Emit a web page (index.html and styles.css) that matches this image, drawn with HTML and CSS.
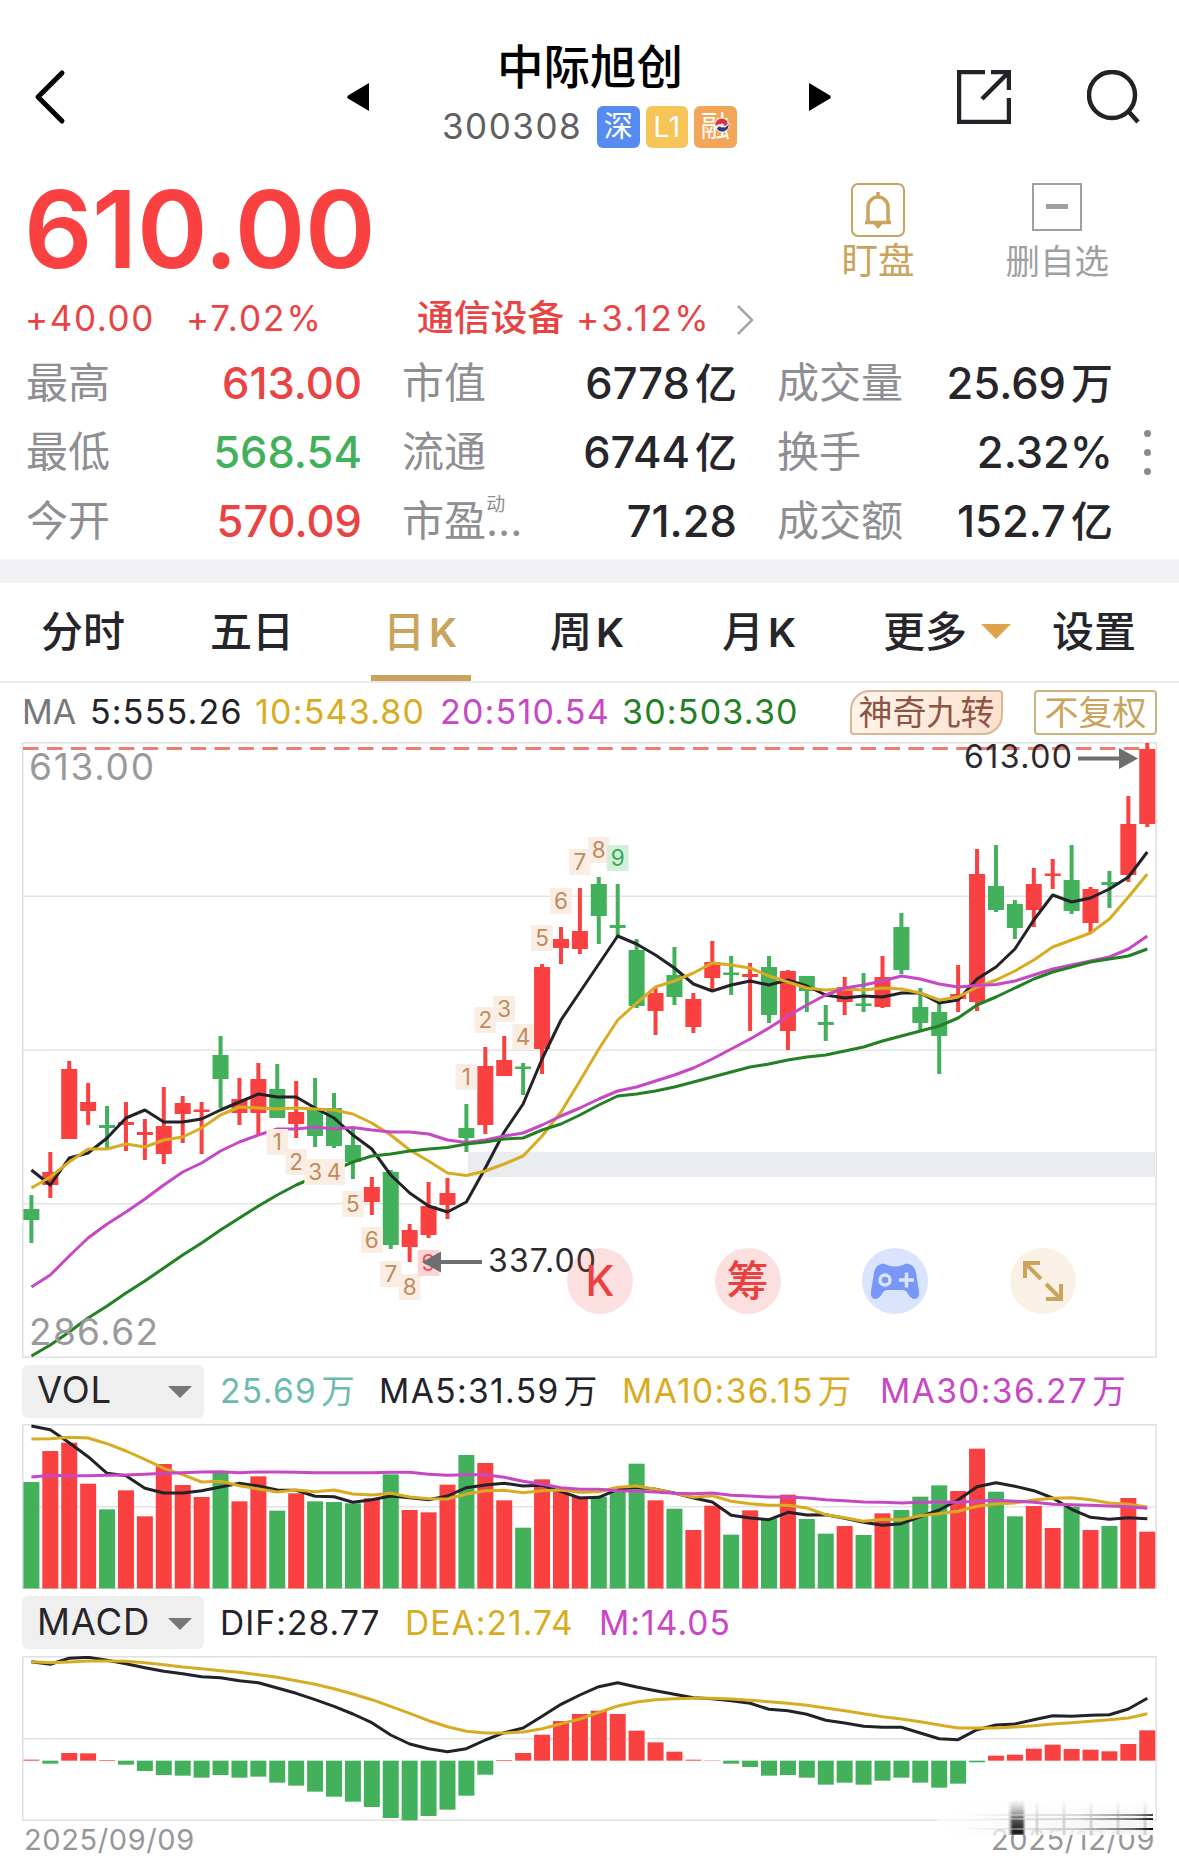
FILE: index.html
```html
<!DOCTYPE html>
<html lang="zh-CN">
<head>
    <meta charset="UTF-8">
    <meta name="viewport" content="width=1179">
    <title>中际旭创 300308</title>
    <link rel="stylesheet" href="styles.css">
</head>
<body>
    <header class="header">
        <svg class="icon-back" viewBox="0 0 32 56"><path d="M28 4 4 28l24 24"/></svg>
        <svg class="icon-prev" viewBox="0 0 22 28"><path d="M22 0v28L1 15.500q-1.500-1.500 0-3z"/></svg>
        <div class="stock">
            <h1>中际旭创</h1>
            <div class="stock-code">
                <span class="code">300308</span>
                <span class="tag tag-blue">深</span>
                <span class="tag tag-yellow">L1</span>
                <span class="tag tag-orange">融
                    <svg class="swirl" viewBox="0 0 16 16">
                        <circle cx="8" cy="8" r="7.500" fill="#f3e9ee"/>
                        <path d="M1.500 9A6.500 6.500 0 0 1 13 4c2 4-2 6-5 4-2-1-4-1-6.500 1z" fill="#d8343f"/>
                        <path d="M14.500 7A6.500 6.500 0 0 1 3 12c0-2 3-3 5-2 3 1 5 0 6.500-3z" fill="#27407f"/>
                        <circle cx="8" cy="8.500" r="2" fill="#f3e9ee"/>
                    </svg>
                </span>
            </div>
        </div>
        <svg class="icon-next" viewBox="0 0 22 28"><path d="M0 0v28l21-12.500q1.500-1.500 0-3z"/></svg>
        <svg class="icon-share" viewBox="0 0 54 54"><path d="M28 2H2v50h50V28M34 2h18v18M52 2 25 29"/></svg>
        <svg class="icon-search" viewBox="0 0 54 54"><circle cx="25" cy="25" r="23"/><path d="m42 42 9 10"/></svg>
    </header>

    <section class="quote">
        <div class="price">610.00</div>
        <div class="actions">
            <div class="action watch">
                <svg viewBox="0 0 54 54">
                    <rect x="1" y="1" width="52" height="52" rx="6" stroke-width="2"/>
                    <path d="M27 9v4M14 39.500h26M17 39V24a10 10 0 0 1 20 0v15" stroke-width="3.500"/>
                    <path d="M22.500 41h9L27 46z" fill="#c9a45c" stroke="none"/>
                </svg>
                <span>盯盘</span>
            </div>
            <div class="action remove">
                <svg viewBox="0 0 54 54">
                    <rect x="3" y="1" width="48" height="46" stroke-width="2"/>
                    <path d="M16 23.500h22" stroke-width="5"/>
                </svg>
                <span>删自选</span>
            </div>
        </div>
    </section>

    <section class="change">
        <span class="change-value">+40.00</span>
        <span class="change-rate">+7.02%</span>
        <span class="sector">通信设备</span>
        <span class="sector-rate">+3.12%</span>
        <svg class="icon-more" viewBox="0 0 18 32"><path d="m2 2 14 14L2 30"/></svg>
    </section>

    <section class="stats">
        <span class="label">最高</span><span class="value up">613.00</span>
        <span class="label">市值</span><span class="value">6778<i>亿</i></span>
        <span class="label">成交量</span><span class="value">25.69<i>万</i></span>
        <span class="label">最低</span><span class="value down">568.54</span>
        <span class="label">流通</span><span class="value">6744<i>亿</i></span>
        <span class="label">换手</span><span class="value">2.32%</span>
        <span class="label">今开</span><span class="value up">570.09</span>
        <span class="label">市盈...<sup>动</sup></span><span class="value">71.28</span>
        <span class="label">成交额</span><span class="value">152.7<i>亿</i></span>
        <div class="dots"><span></span><span></span><span></span></div>
    </section>

    <nav class="tabs">
        <a class="tab">分时</a>
        <a class="tab">五日</a>
        <a class="tab active">日<em>K</em></a>
        <a class="tab">周<em>K</em></a>
        <a class="tab">月<em>K</em></a>
        <a class="tab">更多</a>
        <span class="caret"></span>
        <a class="tab">设置</a>
    </nav>

    <section class="ma-row">
        <span class="ma ma-name">MA</span>
        <span class="ma c-black">5:555.26</span>
        <span class="ma c-gold">10:543.80</span>
        <span class="ma c-purple">20:510.54</span>
        <span class="ma c-green">30:503.30</span>
        <span class="chip nine">神奇九转</span>
        <span class="chip adjust">不复权</span>
    </section>

    <section class="kline">
        <svg id="kline" viewBox="22 742 1135 616"></svg>
        <div class="tools">
            <button class="tool red">K</button>
            <button class="tool red">筹</button>
            <button class="tool blue">
                <svg viewBox="0 0 48 36">
                    <path d="M8 2q4-3 8 0 8 3 16 0 4-3 8 0 4 2 5 8l3 18q1 7-4 8-4 0-7-5-2-4-6-4H17q-4 0-6 4-3 5-7 5-5-1-4-8l3-18q1-6 5-8z" fill="#7897f7"/>
                    <circle cx="14" cy="17" r="5" fill="none" stroke="#dbe4fd" stroke-width="3.500"/>
                    <path d="M28 17h15M35.500 9.500v15" stroke="#dbe4fd" stroke-width="3.500"/>
                </svg>
            </button>
            <button class="tool cream">
                <svg viewBox="0 0 40 40"><path d="M2 17V2h15M2 2l16 16M23 38h15V23M38 38 23 23"/></svg>
            </button>
        </div>
    </section>

    <section class="indicator vol">
        <button class="select">VOL<span></span></button>
        <span class="c-teal">25.69<i>万</i></span>
        <span class="c-black">MA5:31.59<i>万</i></span>
        <span class="c-gold">MA10:36.15<i>万</i></span>
        <span class="c-purple">MA30:36.27<i>万</i></span>
    </section>
    <svg class="panel" id="volume" viewBox="22 0 1135 165"></svg>

    <section class="indicator macd">
        <button class="select">MACD<span></span></button>
        <span class="c-black">DIF:28.77</span>
        <span class="c-gold">DEA:21.74</span>
        <span class="c-purple">M:14.05</span>
    </section>
    <svg class="panel" id="macd" viewBox="22 0 1135 165"></svg>

    <footer class="dates">
        <span>2025/09/09</span>
        <span>2025/12/09</span>
        <div class="smear">
            <i class="bar"></i><i class="streak"></i><i class="streak"></i><i class="streak"></i>
        </div>
    </footer>

    <script src="chart.js"></script>
</body>
</html>
```

FILE: styles.css
```css
:root {
    --up: #fa4141;
    --down: #43b05c;
    --text: #26262a;
    --gray: #8e8e93;
    --gold: #c9a45c;
}

* {
    margin: 0;
    padding: 0;
    box-sizing: border-box;
}

body {
    width: 1179px;
    height: 1860px;
    overflow: hidden;
    background: #fff;
    color: var(--text);
    font-family: Inter, "Noto Sans CJK SC", sans-serif;
}

svg {
    display: block;
}

i, em {
    font-style: normal;
}

button {
    border: none;
    font-family: inherit;
}

/* 顶部 */
.header {
    display: flex;
    align-items: flex-start;
    height: 172px;
    padding-left: 34px;
}

.header > svg {
    flex: none;
}

.icon-back {
    width: 32px;
    height: 56px;
    margin-top: 69px;
    fill: none;
    stroke: #000;
    stroke-width: 5;
    stroke-linecap: round;
    stroke-linejoin: round;
}

.icon-prev,
.icon-next {
    width: 22px;
    height: 28px;
    margin-top: 83px;
}

.icon-prev {
    margin-left: 281px;
}

.stock {
    width: 440px;
    padding-top: 37px;
}

.stock h1 {
    padding-left: 2px;
    font-size: 46.5px;
    line-height: 61px;
    font-weight: 500;
    color: #000;
    text-align: center;
}

.stock-code {
    display: flex;
    align-items: center;
    gap: 6px;
    height: 42px;
    margin-top: 8px;
    padding-left: 73px;
}

.code {
    width: 149px;
    padding-bottom: 2px;
    font-size: 35px;
    letter-spacing: 1.5px;
    color: #606063;
}

.tag {
    position: relative;
    width: 42.5px;
    height: 42px;
    border-radius: 6px;
    color: #fff;
    font-size: 29px;
    line-height: 41px;
    text-align: center;
}

.tag-blue {
    background: #568cf1;
}

.tag-yellow {
    background: #f5c657;
}

.tag-orange {
    background: #f2a758;
}

.swirl {
    position: absolute;
    left: 20px;
    top: 11px;
    width: 16px;
    height: 16px;
}

.icon-share,
.icon-search {
    width: 54px;
    height: 54px;
    fill: none;
    stroke: #222228;
    stroke-width: 4.5;
}

.icon-share {
    margin: 70px 0 0 126px;
}

.icon-search {
    margin: 70px 0 0 76px;
}

/* 现价 */
.quote {
    display: flex;
    justify-content: space-between;
    height: 118px;
}

.price {
    padding-left: 24px;
    font-size: 107px;
    line-height: 114px;
    font-weight: 600;
    letter-spacing: -0.4px;
    color: var(--up);
}

.actions {
    display: flex;
    gap: 91px;
    padding: 11px 70px 0 0;
}

.action {
    display: flex;
    flex-direction: column;
    align-items: center;
    font-size: 36.5px;
    line-height: 48px;
}

.action svg {
    width: 54px;
    height: 54px;
    fill: none;
    stroke: currentColor;
}

.watch {
    color: var(--gold);
}

.remove {
    color: #a0a0a3;
    font-size: 34.5px;
    line-height: 50px;
}

.change {
    display: flex;
    align-items: center;
    height: 56px;
    padding-left: 25px;
    font-size: 35px;
    color: #e84444;
}

.change-value {
    width: 161px;
    letter-spacing: 1.6px;
}

.change-rate {
    width: 231px;
    letter-spacing: 2px;
}

.sector {
    width: 159px;
    font-size: 36.8px;
    line-height: 50px;
    font-weight: 500;
}

.sector-rate {
    width: 160px;
    letter-spacing: 2.4px;
}

.icon-more {
    width: 18px;
    height: 32px;
    margin-top: 4px;
    fill: none;
    stroke: #a5a5a8;
    stroke-width: 2.5;
}

/* 行情数据 */
.stats {
    position: relative;
    display: grid;
    grid-template-columns: 120px 256px 120px 255px 140px 236px;
    grid-template-rows: repeat(3, 69px);
    height: 213px;
    padding: 3px 0 0 26px;
}

.label {
    font-size: 42px;
    line-height: 68px;
    white-space: nowrap;
    color: var(--gray);
}

.value {
    padding-right: 40px;
    font-size: 43.5px;
    line-height: 68px;
    font-weight: 500;
    text-align: right;
    white-space: nowrap;
}

.value i {
    margin-left: 5px;
    font-size: 42px;
    line-height: 60px;
}

.label sup {
    display: inline-block;
    width: 20px;
    margin-left: -36px;
    font-size: 19px;
    line-height: 20px;
    vertical-align: 25px;
}

.up {
    color: #ea4343;
}

.down {
    color: var(--down);
}

.dots {
    position: absolute;
    right: 28px;
    top: 84px;
    display: flex;
    flex-direction: column;
    gap: 12px;
}

.dots span {
    width: 7px;
    height: 7px;
    border-radius: 50%;
    background: #8b8b8e;
}

/* 周期切换 */
.tabs {
    display: grid;
    grid-template-columns: 169px 161px 179px 172px 161px 98px 71px auto;
    justify-items: start;
    height: 124px;
    padding-left: 41px;
    border-top: 24px solid #f2f2f4;
    border-bottom: 2px solid #e9e9ea;
    font-size: 42px;
    line-height: 98px;
    font-weight: 500;
}

.tab {
    white-space: nowrap;
}

.tab em {
    margin-left: 4px;
    font-weight: 600;
    font-size: 40px;
}

.active {
    width: 100px;
    height: 98px;
    padding-left: 12px;
    border-bottom: 6px solid var(--gold);
    color: var(--gold);
}

/* 均线 */
.ma-row {
    display: grid;
    grid-template-columns: 68px 165px 185px 182px 228px 184px auto;
    align-items: center;
    height: 59px;
    padding-left: 22px;
    font-size: 34px;
    letter-spacing: 1.2px;
    white-space: nowrap;
}

.ma {
    padding-bottom: 3px;
}

.ma-name {
    letter-spacing: 0;
    color: #77777a;
}

.c-black {
    color: #222228;
}

.c-gold {
    color: #d8ac22;
}

.c-purple {
    color: #c748c5;
}

.c-green {
    color: #238023;
}

.c-teal {
    color: #6cbab0;
}

.chip {
    height: 45px;
    line-height: 42px;
    text-align: center;
    letter-spacing: 0;
}

.nine {
    width: 153px;
    border: 2px solid #d8b795;
    border-radius: 20px 4px 20px 4px;
    background: linear-gradient(110deg, #fff5ec, #fce0cd);
    color: #8d5545;
}

.adjust {
    width: 123px;
    border: 2px solid #cbb37a;
    border-radius: 4px;
    color: var(--gold);
}

/* K线图 */
.kline {
    position: relative;
    height: 616px;
    padding-left: 22px;
}

.kline > svg {
    width: 1135px;
    height: 616px;
}

.tools {
    position: absolute;
    left: 567px;
    bottom: 44px;
    display: flex;
    gap: 81.6px;
}

.tool {
    display: flex;
    justify-content: center;
    align-items: center;
    width: 66px;
    height: 66px;
    border-radius: 50%;
    font-size: 42px;
    line-height: 60px;
    font-weight: 500;
}

.red {
    background: rgba(235, 65, 55, 0.16);
    color: #ea4040;
}

.blue {
    background: #dbe4fd;
}

.blue svg {
    width: 48px;
    height: 36px;
}

.cream {
    background: #f9f1e5;
}

.cream svg {
    width: 40px;
    height: 40px;
    fill: none;
    stroke: var(--gold);
    stroke-width: 4;
}

/* 指标 */
.indicator {
    display: grid;
    align-items: center;
    height: 66px;
    padding-left: 22px;
    font-size: 33.5px;
    letter-spacing: 1.4px;
    white-space: nowrap;
}

.vol {
    grid-template-columns: 198px 159px 243px 258px auto;
}

.macd {
    grid-template-columns: 198px 185px 194px auto;
    height: 67px;
    letter-spacing: 1.1px;
}

.indicator > span {
    line-height: 50px;
}

.indicator i {
    margin-left: 4px;
}

.select {
    display: flex;
    justify-content: space-between;
    align-items: center;
    width: 182px;
    height: 53px;
    padding: 0 12px 2px 15px;
    border-radius: 6px;
    background: #efefef;
    color: var(--text);
    font-size: 36.5px;
    letter-spacing: 0.8px;
}

.select span,
.caret {
    width: 24px;
    border: 12px solid transparent;
    border-top-color: #77777a;
    border-bottom: none;
}

.select span {
    margin-top: 4px;
}

.caret {
    width: 30px;
    height: 15px;
    margin-top: 41px;
    border-width: 15px 15px 0;
    border-top-color: #dda24c;
}

.panel {
    width: 1135px;
    height: 165px;
    margin-left: 22px;
}

.dates {
    position: relative;
    display: flex;
    justify-content: space-between;
    padding: 0 24px;
    font-size: 29px;
    letter-spacing: 0.6px;
    line-height: 38px;
    color: #97979a;
}

/* 右下角的拖影 */
.smear {
    position: absolute;
    left: 937px;
    top: -22px;
    width: 216px;
    height: 36px;
    background:
        repeating-linear-gradient(90deg, transparent 0 17px, rgba(130, 130, 130, 0.3) 18px 20px, transparent 21px 27px) 54px 0 / 160px 36px no-repeat,
        linear-gradient(90deg, rgba(255, 255, 255, 0.6), #f5f5f5);
    -webkit-mask-image: linear-gradient(transparent, #000 60%);
}

.smear i {
    position: absolute;
}

.smear .bar {
    left: 74px;
    top: 0;
    width: 13px;
    height: 36px;
    background: linear-gradient(rgba(0, 0, 0, 0.3), #111);
    filter: blur(1px);
}

.smear .streak {
    right: 0;
    top: 15px;
    width: 190px;
    height: 2px;
    background: linear-gradient(90deg, transparent, #ccc 60%, #666 90%, #000);
}

.smear .streak:nth-child(3) {
    top: 19px;
}

.smear .streak:nth-child(4) {
    top: 29px;
}
```

FILE: chart.js
```js
const RED = '#fa4141';
const GREEN = '#43b05c';
const BLACK = '#222228';
const GOLD = '#d8ac22';
const PURPLE = '#c748c5';
const DARK_GREEN = '#238023';

const NS = 'http://www.w3.org/2000/svg';
const x = i => 31.4 + i * 18.913;

function add(svg, tag, attrs, text) {
    const el = document.createElementNS(NS, tag);
    for (const key in attrs) el.setAttribute(key, attrs[key]);
    if (text) el.textContent = text;
    svg.appendChild(el);
}

function rect(svg, left, top, width, height, fill) {
    add(svg, 'rect', { x: left, y: top, width, height, fill });
}

function line(svg, values, color, y = v => v) {
    const points = values.map((v, i) => x(i).toFixed(1) + ',' + y(v).toFixed(1)).join(' ');
    add(svg, 'polyline', { points, fill: 'none', stroke: color, 'stroke-width': 3, 'stroke-linejoin': 'round' });
}

function frame(svg, top, height, rows) {
    add(svg, 'rect', { x: 22.8, y: top + 0.8, width: 1133.4, height: height - 1.6, fill: 'none', stroke: '#e0e0e0', 'stroke-width': 1.5 });
    rows.forEach(r => rect(svg, 23, r, 1133, 1.5, '#e4e4e4'));
}

// [颜色, 最高, 实体上沿, 实体下沿, 最低]
const candles = [
    ['g', 1195, 1209, 1220, 1243], ['r', 1152, 1172, 1185, 1198], ['r', 1061, 1069, 1139, 1139], ['r', 1083, 1102, 1111, 1125],
    ['g', 1106, 1125, 1128, 1149], ['r', 1102, 1122, 1125, 1151], ['r', 1119, 1132, 1135, 1160], ['r', 1087, 1126, 1154, 1164],
    ['r', 1096, 1103, 1114, 1143], ['r', 1102, 1109.500, 1112, 1154], ['g', 1036, 1055, 1079, 1108], ['r', 1078, 1099, 1113, 1125],
    ['r', 1063, 1079, 1113, 1135], ['g', 1064, 1089, 1118, 1118], ['r', 1081, 1112, 1124, 1138], ['g', 1078, 1109, 1136, 1147],
    ['g', 1093, 1108, 1146, 1148], ['g', 1128, 1145, 1162, 1179], ['r', 1177, 1187, 1202, 1215], ['g', 1170, 1172, 1245, 1249],
    ['r', 1224, 1230, 1247, 1262], ['r', 1182, 1206, 1235, 1238], ['r', 1178, 1193, 1205, 1219], ['g', 1104, 1128, 1138, 1152],
    ['r', 1047, 1066, 1125, 1134], ['r', 1036, 1060, 1076, 1076], ['g', 1063, 1066.500, 1069, 1095], ['r', 964, 967, 1049, 1074],
    ['r', 927, 939, 948, 964], ['r', 888, 931, 949, 954], ['g', 877, 884, 916, 944], ['g', 884, 925, 928, 936],
    ['g', 939, 950, 1006, 1008], ['r', 988, 993, 1011, 1035], ['g', 947, 975, 997, 1005], ['r', 993, 999, 1027, 1033],
    ['r', 941, 962, 978, 990], ['g', 956, 972.500, 975, 995], ['r', 963, 974, 977, 1031], ['g', 956, 967, 1015, 1023],
    ['r', 970, 971, 1031, 1050], ['g', 976, 976, 991, 1012], ['g', 1005, 1022, 1025, 1041], ['r', 977, 987, 1002, 1015],
    ['g', 973, 1003.500, 1006, 1012], ['r', 956, 977, 1007, 1008], ['g', 913, 927, 970, 974], ['g', 988, 1007, 1023, 1032],
    ['g', 1002, 1012, 1036, 1074], ['r', 965, 994, 999, 1012], ['r', 849, 874, 1002, 1011], ['g', 845, 886, 910, 912],
    ['g', 900, 904, 928, 939], ['r', 868, 884, 910, 927], ['r', 859, 873.500, 876, 889], ['g', 845, 880, 911, 914],
    ['r', 887, 889, 923, 932], ['g', 871, 882, 885, 908], ['r', 796, 824, 875, 882], ['r', 743, 749, 824, 827]
];

const ma5 = [1170, 1185, 1158, 1153, 1138, 1118, 1110, 1122, 1122, 1119, 1110, 1102, 1094, 1097, 1097, 1108, 1118, 1135, 1149, 1175,
    1193, 1206, 1212, 1202, 1168, 1132, 1104, 1059, 1020, 992, 964, 936, 944, 955, 968, 984, 991, 985, 981, 985,
    980, 986, 995, 998, 996, 997, 993, 993, 1003, 1000, 979, 967, 949, 920, 895, 902, 898, 889, 877, 852];
const ma10 = [1188, 1177, 1162, 1149, 1149, 1144, 1147, 1140, 1137, 1128, 1115, 1107, 1108, 1109, 1108, 1109, 1110, 1114, 1123, 1135,
    1150, 1161, 1173, 1175.500, 1171, 1164, 1156, 1136, 1112, 1081, 1049, 1020, 1003, 987, 981, 973, 963, 965, 968, 976,
    982, 988, 990, 989, 990, 988, 989, 993, 1000, 997, 987, 980, 971, 960, 947, 940, 933, 919, 897, 874];
const ma20 = [1287, 1275, 1256, 1238, 1224, 1212, 1199, 1185, 1172, 1163, 1151, 1142, 1135, 1129, 1129, 1127, 1129, 1127.500, 1130, 1132,
    1132, 1134, 1140, 1142.500, 1140, 1136, 1133, 1125, 1116, 1108, 1099, 1091, 1087, 1081, 1075, 1068, 1059, 1049, 1039, 1028,
    1016, 1005, 995, 988, 985, 981, 976, 979, 984, 987, 985.500, 984.500, 981, 975, 969, 965, 961, 957, 949, 936];
const ma30 = [1356, 1345, 1332, 1318, 1306, 1293, 1281, 1268, 1255, 1243, 1230, 1218, 1206, 1195, 1185, 1177, 1170, 1162, 1156, 1154,
    1151, 1149, 1147.500, 1144, 1142, 1139, 1138, 1130, 1124, 1115, 1105, 1096, 1094, 1091, 1087, 1082, 1077, 1072, 1067, 1064,
    1060, 1057, 1055, 1051, 1047, 1041, 1036, 1031, 1026, 1018, 1005, 997, 988, 979, 972, 967, 962, 959, 956, 949];

// 神奇九转: [序号, K线位置, y, 类型]
const nine = [
    [1, 13, 1142], [2, 14, 1162], [3, 15, 1172], [4, 16, 1172], [5, 17, 1204], [6, 18, 1240], [7, 19, 1274], [8, 20, 1287], [9, 21, 1263, 'r'],
    [1, 23, 1077], [2, 24, 1020], [3, 25, 1009], [4, 26, 1037], [5, 27, 938], [6, 28, 901], [7, 29, 862], [8, 30, 850], [9, 31, 858, 'g']
];

function drawKline() {
    const svg = document.getElementById('kline');
    frame(svg, 742, 616, [895.5, 1049.5, 1203]);
    rect(svg, 468, 1152, 688, 25, '#ebecf0');
    add(svg, 'path', { d: 'M23 748.500H1141', stroke: '#ee7d70', 'stroke-width': 3, 'stroke-dasharray': '15.500 8.430' });

    candles.forEach(([c, high, top, bottom, low], i) => {
        const color = c === 'r' ? RED : GREEN;
        rect(svg, x(i) - 2, high, 4, low - high, color);
        rect(svg, x(i) - 8, top, 16, bottom - top, color);
    });
    line(svg, ma5, BLACK);
    line(svg, ma10, GOLD);
    line(svg, ma20, PURPLE);
    line(svg, ma30, DARK_GREEN);

    nine.forEach(([n, i, y, type]) => {
        const bg = type === 'r' ? '#fdd3d4' : type === 'g' ? '#d3eedb' : '#faede3';
        const fg = type === 'r' ? '#e65055' : type === 'g' ? '#35ab50' : '#c08b5b';
        rect(svg, x(i) - 10.8, y - 13, 21.6, 26, bg);
        add(svg, 'text', { x: x(i), y: y + 8, fill: fg, 'font-size': 22.5, 'text-anchor': 'middle' }, n);
    });

    const gray = '#9a9a9c';
    add(svg, 'text', { x: 29, y: 779.5, fill: gray, 'font-size': 37, textLength: 125 }, '613.00');
    add(svg, 'text', { x: 29, y: 1345, fill: gray, 'font-size': 37, textLength: 129 }, '286.62');
    add(svg, 'text', { x: 964, y: 768, fill: '#2b2b2e', 'font-size': 32, textLength: 108 }, '613.00');
    add(svg, 'text', { x: 488, y: 1271.5, fill: '#2b2b2e', 'font-size': 32, textLength: 108 }, '337.00');
    add(svg, 'path', { d: 'M1078 756.500h41v-8.500l19 10.500-19 10.500v-8.500h-41z', fill: '#6e6e70' });
    add(svg, 'path', { d: 'M482 1260h-41v-8.500l-19 10.500 19 10.500v-8.500h41z', fill: '#6e6e70' });
}

const volTop = [396, 303, 278, 401, 478, 421, 499, 342, 405, 441, 365, 454, 379, 482, 430, 454, 456, 460, 445, 373,
    480, 487, 404, 315, 339, 451, 533, 388, 420, 440, 440, 420, 341, 451, 476, 540, 467, 554, 481, 505,
    434, 507, 551, 528, 555, 490, 480, 440, 406, 423, 296, 425, 499, 468, 534, 470, 540, 528, 444, 545];
const vol5 = [228, 239, 278, 320, 370, 377, 415, 429, 429, 422, 411, 400, 408, 420, 421, 439, 440, 457, 449, 438,
    443, 449, 438, 413, 405, 400, 408, 406, 425, 444, 442, 418, 412, 418, 429, 444, 456, 496, 504, 509,
    487, 495, 494, 505, 517, 526, 521, 500, 480, 450, 410, 398, 409, 422, 444, 478, 502, 508, 503, 506];
const vol10 = [267, 266, 262, 264, 281, 303, 328, 355, 374, 396, 394, 407, 417, 426, 420, 425, 420, 432, 435, 430,
    441, 446, 447, 432, 422, 421, 428, 422, 420, 427, 425, 412, 408, 418, 430, 442, 437, 454, 461, 466,
    466, 474, 494, 503, 514, 508, 509, 497, 491, 484, 469, 462, 459, 450, 445, 443, 449, 459, 463, 471];
const vol30 = [381, 376, 377, 377, 376, 375, 373, 370, 368, 366, 365, 368, 366, 366, 367, 368, 368, 368, 368, 367,
    367, 373, 376, 374, 374, 382, 394, 403, 413, 418, 418, 422, 424, 426, 430, 431, 429, 436, 438, 441,
    441, 444, 449, 452, 456, 457, 459, 457, 456, 457, 454, 451, 454, 457, 463, 464, 466, 468, 470, 475];

function drawVolume() {
    const svg = document.getElementById('volume');
    const y = v => (v - 222) / 3;
    frame(svg, 0, 165, [82]);
    volTop.forEach((v, i) => {
        rect(svg, x(i) - 8, y(v), 16, 164.5 - y(v), candles[i][0] === 'r' ? RED : GREEN);
    });
    line(svg, vol5, BLACK, y);
    line(svg, vol10, GOLD, y);
    line(svg, vol30, PURPLE, y);
}

const hist = [510, 522, 490, 491, 511, 525, 544, 556, 558, 564, 556, 564, 561, 579, 588, 606, 621, 636, 652, 685,
    692, 679, 660, 618, 555, 511, 490, 435, 394, 373, 363, 373, 423, 458, 486, 510, 512, 522, 532, 558,
    556, 564, 585, 579, 585, 573, 564, 579, 594, 582, 518, 498, 495, 477, 465, 478, 480, 485, 463, 422];
const dif = [216, 224, 206, 203, 212, 222, 234, 245, 252, 261, 264, 273, 279, 295, 311, 330, 350, 373, 399, 436,
    463, 477, 486, 477, 451, 429, 415, 380, 344, 316, 291, 279, 292, 303, 314, 324, 327, 333, 341, 359,
    363, 374, 392, 400, 410, 413, 413, 430, 447, 450, 420, 406, 403, 390, 378, 380, 377, 375, 358, 326];
const dea = [216, 219, 217, 214, 214, 215, 219, 225, 232, 237, 243, 248, 255, 263, 273, 284, 297, 313, 330, 350,
    371, 393, 411, 425, 430, 430, 427, 417, 402, 388, 368, 349, 337, 330, 327, 326, 326, 328, 332, 336,
    341, 347, 355, 363, 372, 381, 388, 396, 406, 415, 415, 415, 412, 408, 403, 399, 395, 390, 385, 372];

function drawMacd() {
    const svg = document.getElementById('macd');
    const y = v => (v - 199) / 3;
    const zero = 513;
    frame(svg, 0, 165, [82]);
    hist.forEach((v, i) => {
        const up = v < zero;
        rect(svg, x(i) - 8, y(Math.min(v, zero)), 16, Math.abs(v - zero) / 3, up ? RED : GREEN);
    });
    line(svg, dif, BLACK, y);
    line(svg, dea, GOLD, y);
}

drawKline();
drawVolume();
drawMacd();
```
